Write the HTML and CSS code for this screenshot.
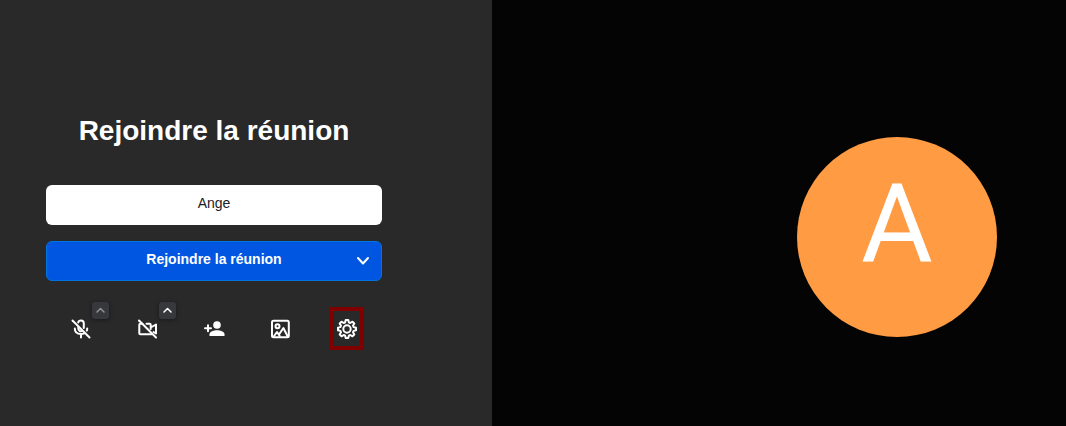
FILE: index.html
```html
<!DOCTYPE html>
<html lang="fr">
<head>
    <meta charset="UTF-8">
    <meta name="viewport" content="width=device-width, initial-scale=1.0">
    <title>Rejoindre la réunion</title>
    <link rel="stylesheet" href="styles.css">
</head>
<body>
    <main class="prejoin">
        <form class="panel">
            <h1 class="title">Rejoindre la réunion</h1>

            <input class="name" type="text" name="name" value="Ange" aria-label="Nom">

            <div class="join">
                <button class="join-main" type="submit">Rejoindre la réunion</button>
                <button class="join-more" type="button" aria-label="Options">
                    <svg width="14" height="10" viewBox="0 0 14 10"><path d="M2 2l5 5.500 5-5.500"/></svg>
                </button>
            </div>

            <div class="toolbar">
                <div class="tool">
                    <button class="tool-button" type="button" aria-label="Micro">
                        <svg viewBox="0 0 20 20">
                            <path d="M7.300 7.500V9.500a2.700 2.700 0 0 0 4 2.300M7.200 3.500C7.500 2.200 8.600 1.500 10 1.500c1.700 0 2.800 1.200 2.800 2.800V9M3.800 9.500c0 3.500 2.600 5.500 6.200 5.500 1.200 0 2.200-.2 3.100-.7M16.200 9.500c0 .8-.1 1.500-.4 2.100M10 15v3.500"/>
                            <path d="M1.500 1.500l17 17"/>
                        </svg>
                    </button>
                    <button class="caret caret-off" type="button" aria-label="Paramètres audio">
                        <svg width="9" height="6" viewBox="0 0 9 6"><path d="M1 5l3.500-3.500L8 5"/></svg>
                    </button>
                </div>
                <div class="tool">
                    <button class="tool-button" type="button" aria-label="Caméra">
                        <svg viewBox="0 0 20 20">
                            <path d="M4.500 4.700H2.300a1 1 0 0 0-1 1v8.600a1 1 0 0 0 1 1h11.500M8.500 4.700h3.200a1 1 0 0 1 1 1v2.800l5.300-3v9l-2.500-1.500M12.700 8.500v1.500"/>
                            <path d="M1 1.500l17 17"/>
                        </svg>
                    </button>
                    <button class="caret" type="button" aria-label="Paramètres vidéo">
                        <svg width="9" height="6" viewBox="0 0 9 6"><path d="M1 5l3.500-3.500L8 5"/></svg>
                    </button>
                </div>
                <div class="tool">
                    <button class="tool-button" type="button" aria-label="Inviter">
                        <svg viewBox="0 0 20 20">
                            <path d="M4 6.200v6M1 9.200h6"/>
                            <circle class="solid" cx="13" cy="6" r="3.800"/>
                            <path class="solid" d="M5.500 17v-1.800c0-2.800 4.500-4 7.500-4s7.500 1.200 7.500 4V17z"/>
                        </svg>
                    </button>
                </div>
                <div class="tool">
                    <button class="tool-button" type="button" aria-label="Arrière-plan">
                        <svg viewBox="0 0 20 20">
                            <rect x="2" y="1.800" width="16.800" height="16.400" rx="1.500"/>
                            <circle cx="7.500" cy="7.300" r="2"/>
                            <path d="M3.700 17.500l3.300-4.500 2.700 4M9 15.500l4.400-6.500 4.300 8.500"/>
                        </svg>
                    </button>
                </div>
                <div class="tool">
                    <button class="tool-button highlighted" type="button" aria-label="Paramètres">
                        <svg viewBox="0 0 20 20">
                            <path d="M8.700 1h2.600l.6 2.400 1.400.6 2.200-1.300 1.800 1.800L16 6.700l.6 1.400 2.400.6v2.600l-2.400.6-.6 1.400 1.300 2.200-1.800 1.800-2.200-1.300-1.400.6-.6 2.400H8.700l-.6-2.400-1.400-.6-2.200 1.300-1.800-1.800L4 13.300l-.6-1.400L1 11.300V8.700l2.400-.6L4 6.700 2.700 4.500l1.800-1.800L6.700 4l1.400-.6z"/>
                            <circle cx="10" cy="10" r="3.700"/>
                        </svg>
                    </button>
                </div>
            </div>
        </form>

        <section class="preview">
            <div class="avatar">A</div>
        </section>
    </main>
</body>
</html>
```
FILE: styles.css
```css
* {
    box-sizing: border-box;
}
body {
    margin: 0;
    font-family: "Liberation Sans", Arial, sans-serif;
    color: #fff;
    background-color: #040404;
}
button {
    padding: 0;
    border: none;
    font: inherit;
    color: inherit;
    background: none;
    cursor: pointer;
}
svg {
    display: block;
    fill: none;
    stroke: currentColor;
    stroke-width: 2;
    stroke-linecap: round;
    stroke-linejoin: round;
}
.prejoin {
    display: flex;
    min-height: 100vh;
}
.panel {
    display: flex;
    flex-direction: column;
    flex: 0 0 492px;
    justify-content: center;
    padding: 36px 110px 0 46px;
    background-color: #292929;
}
.title {
    margin: 0 0 36px;
    font-size: 28px;
    line-height: 36px;
    text-align: center;
}
.name {
    width: 100%;
    height: 40px;
    margin-bottom: 16px;
    padding: 0 16px 4px;
    border: none;
    border-radius: 6px;
    font: inherit;
    font-size: 14px;
    text-align: center;
    color: #1c2025;
    background-color: #fff;
}
.join {
    display: flex;
    height: 40px;
    margin-bottom: 26px;
    border: 1px solid #0074e0;
    border-radius: 6px;
    background-color: #0056e0;
}
.join-main {
    flex: 1;
    padding: 0 0 4px 36px;
    font-size: 14px;
    font-weight: bold;
}
.join-more {
    display: flex;
    flex: 0 0 36px;
    align-items: center;
    justify-content: center;
}
.toolbar {
    display: grid;
    grid-template-columns: repeat(5, 1fr);
    padding: 0 2px;
}
.tool {
    display: flex;
    position: relative;
    justify-content: center;
}
.tool-button {
    display: flex;
    align-items: center;
    justify-content: center;
    width: 34px;
    height: 43px;
    padding-top: 1px;
}
.tool-button svg {
    width: 20px;
    height: 20px;
    overflow: visible;
}
.tool-button .solid {
    fill: currentColor;
    stroke: none;
}
.highlighted {
    border: 4px solid #800000;
}
/* small arrow over the corner of the icon */
.caret {
    display: flex;
    position: absolute;
    top: -5px;
    right: 5px;
    align-items: center;
    justify-content: center;
    width: 17px;
    height: 17px;
    border-radius: 3px;
    background-color: #36383c;
    box-shadow: 0 1px 4px rgba(0, 0, 0, 0.4);
}
.caret svg {
    stroke-width: 1.5;
}
.caret-off {
    color: #929292;
}
.preview {
    display: flex;
    flex: 1;
    align-items: center;
    justify-content: flex-end;
    padding: 48px 69px 0 0;
}
.avatar {
    display: flex;
    align-items: center;
    justify-content: center;
    width: 200px;
    height: 200px;
    padding-bottom: 26px;
    border-radius: 50%;
    font-family: Roboto, sans-serif;
    font-size: 110px;
    line-height: 1;
    background-color: #ff9b42;
}
```
